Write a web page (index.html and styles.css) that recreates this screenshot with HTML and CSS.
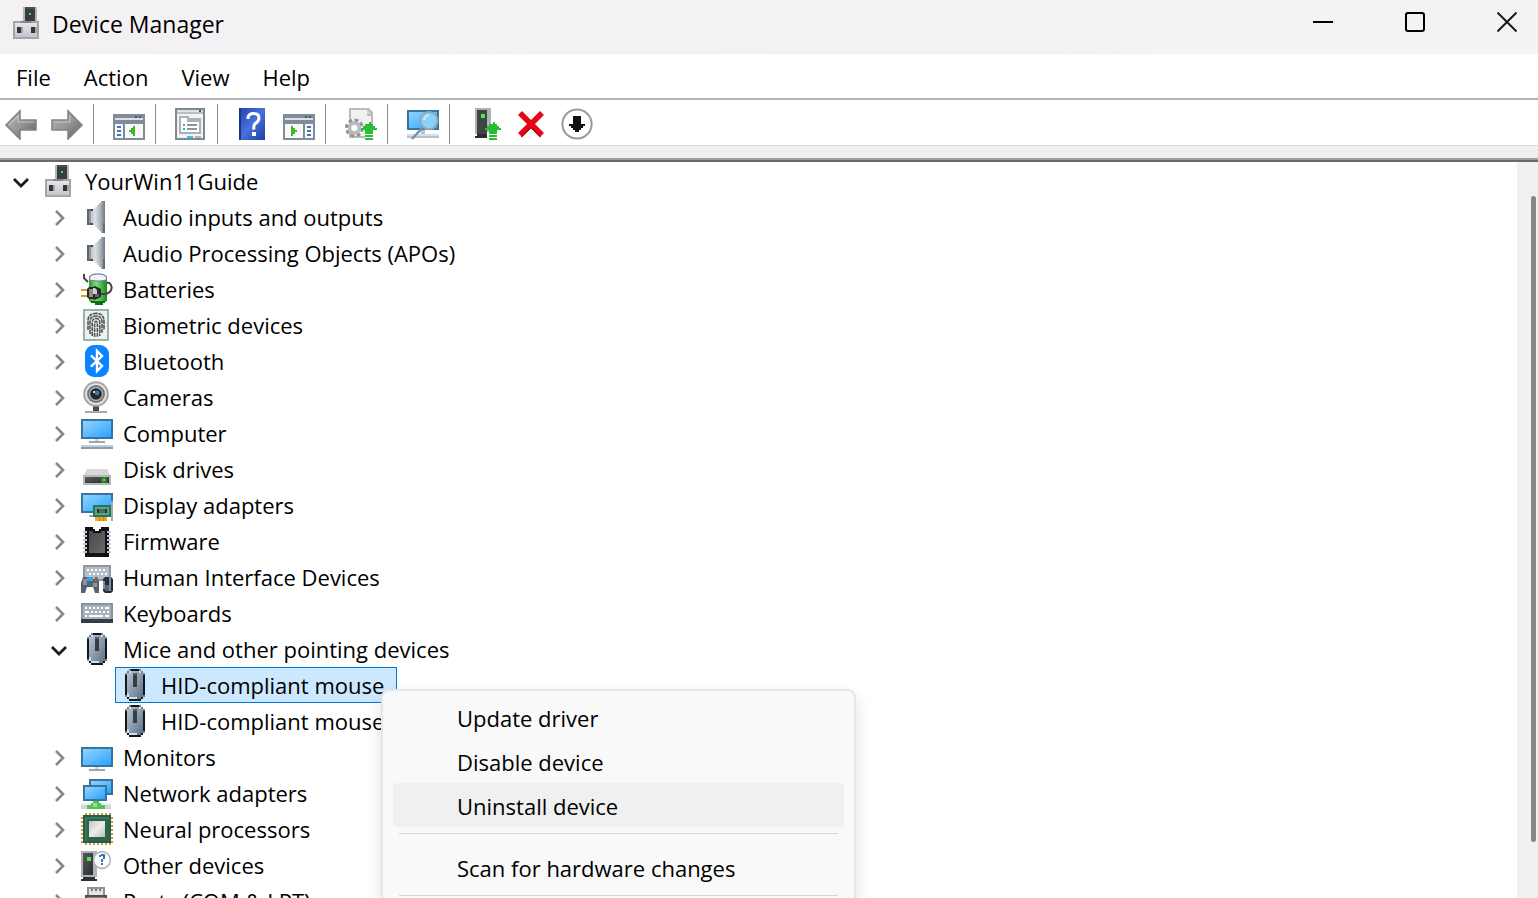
FILE: index.html
```html
<!DOCTYPE html>
<html lang="en">
<head>
<meta charset="utf-8">
<meta name="viewport" content="width=device-width, initial-scale=1">
<title>Device Manager</title>
<link rel="stylesheet" href="styles.css">
</head>
<body>
<svg class="sprite" aria-hidden="true">
  <defs>
    <linearGradient id="g-screen" x1="0" y1="0" x2="1" y2="1"><stop offset="0" stop-color="#8fd3ff"/><stop offset=".5" stop-color="#5fbcff"/><stop offset="1" stop-color="#27a3fb"/></linearGradient>
    <linearGradient id="g-metal" x1="0" y1="0" x2="0" y2="1"><stop offset="0" stop-color="#e6e6ea"/><stop offset="1" stop-color="#c4c4ca"/></linearGradient>
    <linearGradient id="g-dark" x1="0" y1="0" x2="1" y2="1"><stop offset="0" stop-color="#5a5a5a"/><stop offset="1" stop-color="#2c2c2c"/></linearGradient>
    <linearGradient id="g-chip" x1="0" y1="0" x2="1" y2="1"><stop offset="0" stop-color="#484848"/><stop offset="1" stop-color="#6a6a6a"/></linearGradient>
    <linearGradient id="g-cone" x1="0" y1="0" x2="1" y2="0"><stop offset="0" stop-color="#c2c6ca"/><stop offset=".3" stop-color="#dcdfe1"/><stop offset=".65" stop-color="#b0b6bc"/><stop offset="1" stop-color="#6e7a87"/></linearGradient>
    <linearGradient id="g-arrow" x1="0" y1="0" x2="1" y2="1"><stop offset="0" stop-color="#b4b4b4"/><stop offset=".5" stop-color="#969696"/><stop offset="1" stop-color="#5c5c5c"/></linearGradient>
    <linearGradient id="g-help" x1="0" y1="0" x2="1" y2="1"><stop offset="0" stop-color="#2440a8"/><stop offset=".5" stop-color="#4672dc"/><stop offset="1" stop-color="#1f3c9e"/></linearGradient>
    <linearGradient id="g-mouse" x1="0" y1="0" x2="1" y2="1"><stop offset="0" stop-color="#b7c4d4"/><stop offset=".5" stop-color="#8b9cb0"/><stop offset="1" stop-color="#5a6f86"/></linearGradient>
    <linearGradient id="g-battery" x1="0" y1="0" x2="1" y2="0"><stop offset="0" stop-color="#2c9a2c"/><stop offset=".4" stop-color="#7be07b"/><stop offset="1" stop-color="#178a1c"/></linearGradient>
    <linearGradient id="g-silver" x1="0" y1="0" x2="1" y2="1"><stop offset="0" stop-color="#c4c4c4"/><stop offset=".5" stop-color="#ececec"/><stop offset="1" stop-color="#bcbcbc"/></linearGradient>
  </defs>

  <symbol id="i-device" viewBox="0 0 16 16">
    <path fill="#b3b7ba" d="M6 0h7v8H6z"/><path fill="#3a3d3f" d="M7 0h5v8H7z"/><path fill="#4b4f51" d="M7 0h5v1H7z"/><path fill="#3ee84a" d="M9 3h1v1H9z"/>
    <path fill="#a4a4aa" d="M1 7h13v9H1z"/><path fill="url(#g-metal)" d="M2 8h11v7H2z"/><path fill="#84848a" d="M5 7h5v1H5z"/>
    <path fill="#33353a" d="M3 10h2v3H3zM10 10h2v3h-2z"/><path fill="#a2a4a8" d="M5 10h1v3H5zM12 10h1v3h-1z"/>
  </symbol>

  <symbol id="i-speaker" viewBox="0 0 16 16">
    <path fill="#5b6670" d="M3 4h3v8H3z"/><path fill="#8d98a2" d="M4 5h1v6H4z"/>
    <path fill="url(#g-cone)" d="M5 5h1V4h1V3h1V2h1V1h1V0h2v16h-2v-1H9v-1H8v-1H7v-1H6v-1H5z"/><path fill="#606c79" d="M11 11h1v5h-1z"/><path fill="#3e4851" d="M5 4h1v1H5zM5 11h1v1H5z"/>
  </symbol>

  <symbol id="i-battery" viewBox="0 0 16 16">
    <path fill="url(#g-battery)" d="M4 3h9v11q-4.500 3-9 0z"/><path fill="#f2f2fa" stroke="#7d7d9c" stroke-width=".6" d="M4.300 3.500V2Q5 .4 8.500 .4t4.200 1.600v1.500q-4 1-8.400 0z"/>
    <path fill="#0d6d14" d="M5 14h7v1H5zM7 15h4v1H7z"/>
    <path fill="none" stroke="#444" d="M1.500 .5v2l2 2M10 10.500h2.500q3-1 2.800-3.500-.5-2.500-2.300-2"/>
    <path fill="#d9a520" d="M0 8h4v1H0zM0 11h4v1H0z"/><path fill="#2a2a2a" d="M3 8l1-1h2l1-.5 3 1.500v4l-3 1.500-1-.5H4l-1-1z"/><path fill="#8f8f8f" d="M4 8h2v4H4z"/><path fill="#cfcfcf" d="M6 7.500h1l1 1v2H6z"/><path fill="#666" d="M7 10.500h2v1.500H7z"/>
  </symbol>

  <symbol id="i-finger" viewBox="0 0 16 16">
    <path fill="#93b5ab" d="M1 0h13v16H1z"/><path fill="#eef1ee" d="M2 1h11v14H2z"/>
    <g fill="none" stroke="#4f5553" stroke-width=".8" stroke-dasharray="2 .35"><path d="M3.500 10.500V6q0-3.800 4-3.800t4 3.800v4.500"/><path d="M4.500 12.500V6.500q0-3 3-3t3 3v5.500"/><path d="M5.600 13.500V7q0-2.300 1.900-2.300T9.400 7v6.500"/><path d="M6.800 14V7.500q0-1.300.7-1.300t.7 1.300V14"/></g>
  </symbol>

  <symbol id="i-bluetooth" viewBox="0 0 16 16">
    <rect x="2" width="12" height="16" rx="4.500" fill="#0a84ff"/><path fill="none" stroke="#fff" stroke-width="1.200" d="M5 5.200l5.500 5.300L8 13V3l2.500 2.500L5 10.800"/>
  </symbol>

  <symbol id="i-camera" viewBox="0 0 16 16">
    <path fill="#4a4a4a" d="M6 12h3v3H6z"/><path fill="#a8a8a8" d="M2 15h11v1H2z"/><circle cx="7.500" cy="6.500" r="6.400" fill="#a5a5a5"/><circle cx="7.500" cy="6.500" r="5.400" fill="#e4e4e4"/><circle cx="7.500" cy="6.500" r="4.500" fill="#747474"/><circle cx="7.500" cy="6.500" r="3.600" fill="#b0b0b0"/><circle cx="7.500" cy="6.500" r="2.900" fill="#1d2733"/><circle cx="8" cy="6" r="1.200" fill="#4d75a0"/><path fill="#c3d7e8" d="M6 5h1v1H6z"/>
  </symbol>

  <symbol id="i-computer" viewBox="0 0 16 16">
    <path fill="#38749c" d="M0 1h16v10H0z"/><path fill="url(#g-screen)" d="M1 2h14v8H1z"/><path fill="#ccd5dd" d="M7 11h2v1H7z"/><path fill="#97a7b6" d="M4 12h8v1H4z"/><path fill="#c4ced8" d="M0 14h16v1H0z"/><path fill="#899caf" d="M0 15h16v1H0z"/>
  </symbol>

  <symbol id="i-disk" viewBox="0 0 16 16">
    <path fill="#d7d7d9" d="M3 8h10l2 4H1z"/><path fill="#b5b7b9" d="M1 11h14v5H1z"/><path fill="url(#g-dark)" d="M2 12h12v3H2z"/><path fill="#2f7d35" d="M10 12h3v3h-3z"/><path fill="#45ee4c" d="M11 13h1v1h-1z"/>
  </symbol>

  <symbol id="i-display" viewBox="0 0 16 16">
    <path fill="#38749c" d="M0 2h16v10H0z"/><path fill="url(#g-screen)" d="M1 3h14v8H1z"/><path fill="#a6a9ac" d="M15 6h1v10h-1zM4 13h3v1H4z"/><path fill="#287657" d="M6 8h9v6H6z"/><path fill="#57a57e" d="M7 9h7v4H7z"/><path fill="#24372f" d="M8 10h5v2H8z"/><path fill="#53695e" d="M9 10h3v2H9z"/><path fill="#f0a41d" d="M7 14h6v2H7z"/><path fill="#cf7f10" d="M9 14h.5v2H9zM11 14h.5v2h-.5z"/>
  </symbol>

  <symbol id="i-firmware" viewBox="0 0 16 16">
    <path fill="#111" d="M2 1h4v1h1v1h2V2h1V1h4v15H2z"/><path fill="url(#g-chip)" d="M4 3h2v1h4V3h2v11H4z"/>
    <path fill="#b9c8d6" d="M1 3h2v1H1zM1 5h2v1H1zM1 7h2v1H1zM1 9h2v1H1zM1 11h2v1H1zM1 13h2v1H1zM13 3h2v1h-2zM13 5h2v1h-2zM13 7h2v1h-2zM13 9h2v1h-2zM13 11h2v1h-2zM13 13h2v1h-2z"/>
  </symbol>

  <symbol id="i-hid" viewBox="0 0 16 16">
    <path fill="#8c99a5" d="M1 2h14v8H1z"/><path fill="#b7bfc6" d="M2 3h12v6H2z"/><path fill="#fff" d="M3 4h1v1H3zM5 4h1v1H5zM7 4h1v1H7zM9 4h1v1H9zM11 4h1v1h-1zM4 6h1v1H4zM6 6h1v1H6zM8 6h1v1H8zM10 6h1v1h-1zM12 6h1v1h-1z"/>
    <path fill="#56626d" d="M1 8h7l1 2v6H7l-1-3H3l-1 3H0v-5z"/><path fill="#8795a2" d="M1 9h2v3H1zM6 11h2v2H6z"/><path fill="#2aa5f5" d="M3 8h3v2H3z"/><path fill="#f3b04c" d="M6 8h1v1H6z"/><path fill="#e0522c" d="M7 9h1v1H7z"/>
    <path fill="#252d36" d="M12 8h3l1 1v6l-1 1h-3l-1-1V9z"/><path fill="#7c8ea2" d="M14 8h1v7h-1zM11 10h1v4h-1z"/><path fill="#56667a" d="M12 12h2v3h-2z"/>
  </symbol>

  <symbol id="i-keyboard" viewBox="0 0 16 16">
    <path fill="#87939d" d="M0 3h16v9H0z"/><path fill="#a9b3bb" d="M1 4h14v7H1z"/><path fill="#333e46" d="M0 11h16v2H0z"/>
    <path fill="#fff" d="M2 5h1v1H2zM4 5h1v1H4zM6 5h1v1H6zM8 5h1v1H8zM10 5h1v1h-1zM12 5h2v1h-2zM2 7h2v1H2zM5 7h1v1H5zM7 7h1v1H7zM9 7h1v1H9zM11 7h1v1h-1zM13 7h1v1h-1zM2 9h1v1H2zM4 9h7v1H4zM12 9h2v1h-2z"/>
  </symbol>

  <symbol id="i-mouse" viewBox="0 0 16 16">
    <path fill="#777d84" d="M5 0h6v1h1v1h1v12h-1v1h-1v1H5v-1H4v-1H3V2h1V1h1z"/><path fill="#14171a" d="M6 0h4v1H6zM3 3h1v10H3zM12 3h1v10h-1zM4 13h1v2H4zM11 13h1v2h-1zM5 15h6v1H5z"/><path fill="url(#g-mouse)" d="M5 1h6v1h1v12h-1v1H5v-1H4V2h1z"/><path fill="#d5dde6" d="M5 1h1v1H5zM10 1h1v1h-1zM4 12h1v2H4zM5 14h4v1H5z"/><path fill="#3c3c3c" d="M7 2h2v7H7z"/><path fill="#5c5f61" d="M7 2h2v1H7z"/>
  </symbol>

  <symbol id="i-monitor" viewBox="0 0 16 16">
    <path fill="#38749c" d="M0 3h16v10H0z"/><path fill="url(#g-screen)" d="M1 4h14v8H1z"/><path fill="#ccd5dd" d="M7 13h2v1H7z"/><path fill="#97a7b6" d="M4 14h8v1H4z"/>
  </symbol>

  <symbol id="i-network" viewBox="0 0 16 16">
    <path fill="#38749c" d="M4 1h12v8H4z"/><path fill="url(#g-screen)" d="M5 2h10v6H5z"/><path fill="#38749c" d="M1 4h12v8H1z"/><path fill="url(#g-screen)" d="M2 5h10v6H2z"/>
    <path fill="#d3d6d8" d="M0 13h15v3H0z"/><path fill="#efefef" d="M0 13h15v1H0z"/><path fill="#55c455" d="M6 12h3v1h1v1h2v2H3v-2h2v-1h1z"/><path fill="#8fe08a" d="M6 13h2v2H6z"/>
  </symbol>

  <symbol id="i-neural" viewBox="0 0 16 16">
    <path fill="none" stroke="#c99a40" stroke-dasharray="1 1" d="M2 .5h13M2 15.500h13M.5 2v13M15.500 2v13"/><path fill="#2a5c46" d="M1 1h14v14H1z"/><path fill="#3a775b" d="M2 2h12v12H2z"/><path fill="#2d624b" d="M3 3h11v11H3z"/><path fill="url(#g-silver)" d="M4 4h8v8H4z"/>
  </symbol>

  <symbol id="i-other" viewBox="0 0 16 16">
    <path fill="#aeb3b8" d="M0 1h8v13H0z"/><path fill="url(#g-dark)" d="M1 2h5v11H1z"/><path fill="#2d3034" d="M0 15h8v1H0zM1 14h6v1H1z"/><path fill="#3ef04a" d="M3 4h2v2H3z"/>
    <circle cx="10.500" cy="5.500" r="4.200" fill="#fff" stroke="#b4b8bc" stroke-width=".8"/><path fill="#2a78c2" d="M9 3h1v1H9zM10 2.500h2v1h-2zM11 3h1v2h-1zM10 5h1v1.500h-1zM10 7h1v1h-1z"/>
  </symbol>

  <symbol id="i-port" viewBox="0 0 16 16">
    <path fill="#909396" d="M3 1h9v5H3z"/><path fill="#e3e3e3" d="M4 2h7v3H4z"/><path fill="#777" d="M5 2h1v1H5zM7 2h1v1H7zM9 2h1v1H9z"/><path fill="#4d4f51" d="M2 5h11v11H2z"/><path fill="#858789" d="M3 6h9v9H3z"/>
  </symbol>

  <symbol id="t-back" viewBox="0 0 16 16">
    <path fill="url(#g-arrow)" stroke="#858585" stroke-width=".8" d="M.5 8.500L7.500 1.500V6H15.500v5H7.500v4.500z"/><path fill="none" stroke="#c4c4c4" stroke-width=".6" d="M2 8.500l4.600-4.600V7h8"/>
  </symbol>

  <symbol id="t-forward" viewBox="0 0 16 16">
    <path fill="url(#g-arrow)" stroke="#858585" stroke-width=".8" d="M15.500 8.500L8.500 1.500V6H.5v5h8v4.500z"/><path fill="none" stroke="#c4c4c4" stroke-width=".6" d="M1.400 7h8V3.900"/>
  </symbol>

  <symbol id="t-tree" viewBox="0 0 16 16">
    <path fill="#808d99" d="M0 3h16v13H0z"/><path fill="#dbe1e6" d="M1 5h14v1H1z"/><path fill="#f8f8f8" d="M1 8h4v7H1zM6 8h9v7H6z"/><path fill="#3e5875" d="M11 4h1v1h-1zM13 4h1v1h-1z"/><path fill="#3b76bd" d="M2 9h2v1H2zM2 11h2v1H2zM2 13h2v1H2z"/><path fill="#43b52c" d="M8 11h1v-1h1V9h1v5h-1v-1H9v-1H8z"/>
  </symbol>

  <symbol id="t-pane" viewBox="0 0 16 16">
    <path fill="#808d99" d="M0 3h16v13H0z"/><path fill="#dbe1e6" d="M1 5h14v1H1z"/><path fill="#f8f8f8" d="M1 8h9v7H1zM11 8h4v7h-4z"/><path fill="#3e5875" d="M11 4h1v1h-1zM13 4h1v1h-1z"/><path fill="#3b76bd" d="M12 9h2v1h-2zM12 11h2v1h-2zM12 13h2v1h-2z"/><path fill="#43b52c" d="M7 11H6v-1H5V9H4v5h1v-1h1v-1h1z"/>
  </symbol>

  <symbol id="t-properties" viewBox="0 0 16 16">
    <path fill="#7d8890" d="M0 0h15v16H0z"/><path fill="#dde1e3" d="M1 1h13v1H1z"/><path fill="#f3f3f3" d="M1 3h13v12H1z"/><path fill="#b7bec4" d="M1 2h13v1H1z"/><path fill="#40566c" d="M12 1h1v1h-1z"/><path fill="#a8b1ba" d="M2 4h5v1h6v8H2z"/><path fill="#fff" d="M3 5h3v1h6v6H3z"/><path fill="#a8b1ba" d="M6 5h1v1h5v1H6z"/><path fill="#27a8e0" d="M4 8h1v1H4zM4 10h1v1H4z"/><path fill="#8d9499" d="M6 8h5v1H6zM6 10h5v1H6z"/><path fill="#1fc8f5" d="M6 14h3v1H6z"/><path fill="#b4b8bb" d="M10 14h3v1h-3z"/>
  </symbol>

  <symbol id="t-help" viewBox="0 0 16 16">
    <path fill="url(#g-help)" d="M1 0h13v16H1z"/><path fill="#1b358b" d="M1 0h1v16H1z"/><path fill="none" stroke="#fff" stroke-width="1.500" d="M5.500 5.500V5Q5.700 2.800 8.300 2.800T11 5Q11 6.500 9.500 7.500T8.500 10.800"/><path fill="#fff" d="M7.500 12h2v2h-2z"/>
  </symbol>

  <symbol id="t-update" viewBox="0 0 16 16">
    <path fill="#b9bbbd" d="M2 0h10l2 2v13H2z"/><path fill="#f1f1f1" d="M3 1h8v3h2v10H3z"/><path fill="#d5d5d5" d="M11 1l2 2h-2z"/>
    <circle cx="4.700" cy="10" r="3.800" fill="none" stroke="#8f9498" stroke-width="1.800" stroke-dasharray="1.800 1.180"/><circle cx="4.700" cy="10" r="2.500" fill="none" stroke="#b5babd" stroke-width="1.800"/><circle cx="4.700" cy="10" r="1.200" fill="#fff"/>
    <path fill="#fff" d="M10 12h4v4h-4z"/><path fill="#27bd35" d="M12 7h1v1h1v1h1v1h1v1h-2v1h-4v-1H8v-1h1V9h1V8h2zM10 11h4v2h-4zM10 13.500h4v1h-4zM10 15h4v1h-4z"/>
  </symbol>

  <symbol id="t-scan" viewBox="0 0 16 16">
    <path fill="#38749c" d="M0 1h16v10H0z"/><path fill="url(#g-screen)" d="M1 2h14v8H1z"/><path fill="#b7c2cd" d="M7 11h2v2H7zM0 14h16v1H0z"/><path fill="#d8dfe6" d="M0 13h16v1H0z"/><circle cx="11" cy="6.300" r="4.300" fill="#8bd1fb" stroke="#91a6b6"/><path stroke="#7990a1" stroke-width="1.200" d="M7.800 9.800L2.500 15.500"/><path fill="none" stroke="#c8e9ff" d="M8.500 6q.5-2 2.500-2.500"/>
  </symbol>

  <symbol id="t-enable" viewBox="0 0 16 16">
    <path fill="#aeb1b5" d="M3 0h8v13H3z"/><path fill="#414447" d="M4 1h5v12H4z"/><path fill="#2b2d30" d="M3 14h6v1H3zM4 13h5v1H4z"/><path fill="#3ef04a" d="M6 3h2v2H6z"/><path fill="#fff" d="M9 12h6v4H9z"/>
    <path fill="#27bd35" d="M12 7h1v1h1v1h1v1h1v1h-2v2h-4v-2H8v-1h1V9h1V8h2zM10 13.500h4v1h-4zM10 15h4v1h-4z"/>
  </symbol>

  <symbol id="t-remove" viewBox="0 0 16 16">
    <path stroke="#e30613" stroke-width="2.800" d="M2.500 2.500l11 11M13.500 2.500l-11 11"/><path stroke="#b4000c" stroke-width=".6" d="M8 9.800l4.800 4.800M8 9.800l-4.800 4.800"/>
  </symbol>

  <symbol id="t-down" viewBox="0 0 16 16">
    <circle cx="8" cy="8" r="7.300" fill="#fff" stroke="#999"/><path fill="#111" d="M6 4h4v4h2v1h-1v1h-1v1H9v1H7v-1H6v-1H5V9H4V8h2z"/>
  </symbol>

  <symbol id="c-closed" viewBox="0 0 16 16"><path fill="none" stroke="#888" stroke-width="2.600" d="M5 1l7 7-7 7"/></symbol>
  <symbol id="c-open" viewBox="0 0 16 16"><path fill="none" stroke="#1b1b1b" stroke-width="2.800" d="M1 5l7 7 7-7"/></symbol>
</svg>

<main class="window">
  <header class="titlebar">
    <svg class="icon"><use href="#i-device"/></svg>
    <h1 class="title">Device Manager</h1>
    <div class="controls">
      <button class="control" aria-label="Minimize"><svg class="glyph" viewBox="0 0 20 20"><path d="M0 10h20"/></svg></button>
      <button class="control" aria-label="Maximize"><svg class="glyph" viewBox="0 0 20 20"><rect x="1" y="1" width="18" height="18" rx="2"/></svg></button>
      <button class="control" aria-label="Close"><svg class="glyph glyph-thin" viewBox="0 0 20 20"><path d="M.5 .5l19 19M19.500 .5l-19 19"/></svg></button>
    </div>
  </header>

  <nav class="menubar">
    <button class="menu">File</button>
    <button class="menu">Action</button>
    <button class="menu">View</button>
    <button class="menu">Help</button>
  </nav>

  <div class="toolbar" role="toolbar" aria-label="Tools">
    <button class="tool" aria-label="Back"><svg class="icon"><use href="#t-back"/></svg></button>
    <button class="tool" aria-label="Forward"><svg class="icon"><use href="#t-forward"/></svg></button>
    <span class="divider"></span>
    <button class="tool" aria-label="Show or hide console tree"><svg class="icon"><use href="#t-tree"/></svg></button>
    <span class="divider"></span>
    <button class="tool" aria-label="Properties"><svg class="icon"><use href="#t-properties"/></svg></button>
    <span class="divider"></span>
    <button class="tool" aria-label="Help topics"><svg class="icon"><use href="#t-help"/></svg></button>
    <button class="tool" aria-label="Show or hide action pane"><svg class="icon"><use href="#t-pane"/></svg></button>
    <span class="divider"></span>
    <button class="tool" aria-label="Update driver"><svg class="icon"><use href="#t-update"/></svg></button>
    <span class="divider"></span>
    <button class="tool" aria-label="Scan for hardware changes"><svg class="icon"><use href="#t-scan"/></svg></button>
    <span class="divider"></span>
    <button class="tool" aria-label="Enable device"><svg class="icon"><use href="#t-enable"/></svg></button>
    <button class="tool" aria-label="Uninstall device"><svg class="icon"><use href="#t-remove"/></svg></button>
    <button class="tool" aria-label="Disable device"><svg class="icon"><use href="#t-down"/></svg></button>
  </div>
  <div class="ridge"></div>

  <section class="content">
    <ul class="tree">
      <li>
        <div class="row"><button class="twisty" aria-label="Collapse"><svg><use href="#c-open"/></svg></button><span class="node"><svg class="icon"><use href="#i-device"/></svg>YourWin11Guide</span></div>
        <ul class="branch">
          <li class="row"><button class="twisty" aria-label="Expand"><svg><use href="#c-closed"/></svg></button><span class="node"><svg class="icon"><use href="#i-speaker"/></svg>Audio inputs and outputs</span></li>
          <li class="row"><button class="twisty" aria-label="Expand"><svg><use href="#c-closed"/></svg></button><span class="node"><svg class="icon"><use href="#i-speaker"/></svg>Audio Processing Objects (APOs)</span></li>
          <li class="row"><button class="twisty" aria-label="Expand"><svg><use href="#c-closed"/></svg></button><span class="node"><svg class="icon"><use href="#i-battery"/></svg>Batteries</span></li>
          <li class="row"><button class="twisty" aria-label="Expand"><svg><use href="#c-closed"/></svg></button><span class="node"><svg class="icon"><use href="#i-finger"/></svg>Biometric devices</span></li>
          <li class="row"><button class="twisty" aria-label="Expand"><svg><use href="#c-closed"/></svg></button><span class="node"><svg class="icon"><use href="#i-bluetooth"/></svg>Bluetooth</span></li>
          <li class="row"><button class="twisty" aria-label="Expand"><svg><use href="#c-closed"/></svg></button><span class="node"><svg class="icon"><use href="#i-camera"/></svg>Cameras</span></li>
          <li class="row"><button class="twisty" aria-label="Expand"><svg><use href="#c-closed"/></svg></button><span class="node"><svg class="icon"><use href="#i-computer"/></svg>Computer</span></li>
          <li class="row"><button class="twisty" aria-label="Expand"><svg><use href="#c-closed"/></svg></button><span class="node"><svg class="icon"><use href="#i-disk"/></svg>Disk drives</span></li>
          <li class="row"><button class="twisty" aria-label="Expand"><svg><use href="#c-closed"/></svg></button><span class="node"><svg class="icon"><use href="#i-display"/></svg>Display adapters</span></li>
          <li class="row"><button class="twisty" aria-label="Expand"><svg><use href="#c-closed"/></svg></button><span class="node"><svg class="icon"><use href="#i-firmware"/></svg>Firmware</span></li>
          <li class="row"><button class="twisty" aria-label="Expand"><svg><use href="#c-closed"/></svg></button><span class="node"><svg class="icon"><use href="#i-hid"/></svg>Human Interface Devices</span></li>
          <li class="row"><button class="twisty" aria-label="Expand"><svg><use href="#c-closed"/></svg></button><span class="node"><svg class="icon"><use href="#i-keyboard"/></svg>Keyboards</span></li>
          <li>
            <div class="row"><button class="twisty" aria-label="Collapse"><svg><use href="#c-open"/></svg></button><span class="node"><svg class="icon"><use href="#i-mouse"/></svg>Mice and other pointing devices</span></div>
            <ul class="branch">
              <li class="row leaf"><span class="node selected"><svg class="icon"><use href="#i-mouse"/></svg>HID-compliant mouse</span></li>
              <li class="row leaf"><span class="node"><svg class="icon"><use href="#i-mouse"/></svg>HID-compliant mouse</span></li>
            </ul>
          </li>
          <li class="row"><button class="twisty" aria-label="Expand"><svg><use href="#c-closed"/></svg></button><span class="node"><svg class="icon"><use href="#i-monitor"/></svg>Monitors</span></li>
          <li class="row"><button class="twisty" aria-label="Expand"><svg><use href="#c-closed"/></svg></button><span class="node"><svg class="icon"><use href="#i-network"/></svg>Network adapters</span></li>
          <li class="row"><button class="twisty" aria-label="Expand"><svg><use href="#c-closed"/></svg></button><span class="node"><svg class="icon"><use href="#i-neural"/></svg>Neural processors</span></li>
          <li class="row"><button class="twisty" aria-label="Expand"><svg><use href="#c-closed"/></svg></button><span class="node"><svg class="icon"><use href="#i-other"/></svg>Other devices</span></li>
          <li class="row"><button class="twisty" aria-label="Expand"><svg><use href="#c-closed"/></svg></button><span class="node"><svg class="icon"><use href="#i-port"/></svg>Ports (COM &amp; LPT)</span></li>
        </ul>
      </li>
    </ul>
    <div class="scrollbar"><div class="thumb"></div></div>
  </section>

  <div class="context" role="menu">
    <button class="command" role="menuitem">Update driver</button>
    <button class="command" role="menuitem">Disable device</button>
    <button class="command active" role="menuitem">Uninstall device</button>
    <hr class="rule">
    <button class="command" role="menuitem">Scan for hardware changes</button>
    <hr class="rule">
  </div>
</main>
</body>
</html>
```
FILE: styles.css
```css
* { box-sizing: border-box; }

body {
  margin: 0;
  font-family: "Open Sans", "Noto Sans", sans-serif;
  font-size: 22px;
  line-height: 36px;
  color: #000;
  background: #fff;
}

button {
  margin: 0;
  padding: 0;
  border: 0;
  background: none;
  font: inherit;
  color: inherit;
}

ul { margin: 0; padding: 0; list-style: none; }

.sprite { position: absolute; width: 0; height: 0; }
.icon { display: block; flex: none; width: 32px; height: 32px; }

.window {
  position: relative;
  display: flex;
  flex-direction: column;
  height: 100vh;
  overflow: hidden;
}

/* Title bar */
.titlebar {
  display: flex;
  flex: none;
  align-items: flex-start;
  height: 54px;
  padding: 7px 0 0 11px;
  background: linear-gradient(90deg, #f4f1f3, #f1f3f5 80%, #f3f3f3 88%);
}
.title {
  flex: 1;
  margin: 0 0 0 9px;
  font-size: 23px;
  font-weight: 400;
  line-height: 34px;
}
.controls { display: flex; gap: 30px; }
.control {
  display: flex;
  align-items: center;
  justify-content: center;
  width: 62px;
  height: 30px;
}
.glyph { width: 20px; height: 20px; fill: none; stroke: #000; stroke-width: 2; }
.glyph-thin { stroke: #1a1a1a; }

/* Menu bar */
.menubar {
  display: flex;
  flex: none;
  gap: 1px;
  height: 46px;
  border-bottom: 2px solid #b3b3b7;
}
.menu { padding: 0 16px; line-height: 46px; }

/* Toolbar */
.toolbar {
  display: flex;
  flex: none;
  gap: 4px;
  height: 46px;
  padding: 4px 0 1px;
  border-bottom: 1px solid #d9d9d9;
}
.tool {
  display: flex;
  align-items: center;
  justify-content: center;
  width: 42px;
}
.divider { width: 1px; margin: 0 10px 0 1px; background: #8c8c8c; }
.ridge {
  flex: none;
  height: 14px;
  background: #f0f0f0;
  border-bottom: 2px solid #9f9f9f;
}

/* Device tree */
.content {
  display: flex;
  flex: 1;
  min-height: 0;
  border-top: 2px solid #696969;
}
.tree { flex: 1; padding: 1px 0 0 2px; overflow: hidden; }
.branch { padding-left: 38px; }
.row { display: flex; height: 36px; }
.twisty {
  display: flex;
  align-items: center;
  justify-content: center;
  width: 38px;
  padding-top: 2px;
}
.twisty svg { width: 16px; height: 16px; }
.node {
  display: flex;
  align-items: center;
  gap: 10px;
  padding: 0 6px 0 2px;
  border: 1px solid transparent;
  line-height: 36px;
  white-space: nowrap;
}
.leaf { padding-left: 37px; }
.leaf .node { padding: 0 12px 0 3px; }
.selected { background: #cce8ff; border-color: #0078d4; }

.scrollbar {
  flex: none;
  width: 21px;
  padding: 34px 2px 0 14px;
  background: #f0f0f0;
}
.thumb { height: 92%; border-radius: 3px; background: #868686; }

/* Context menu */
.context {
  position: absolute;
  top: 689px;
  left: 381px;
  width: 475px;
  padding: 4px 10px;
  border: 2px solid #e5e5e5;
  border-radius: 8px;
  background: #f9f9f9;
  box-shadow: 0 8px 16px rgba(0, 0, 0, .12);
}
.command {
  display: block;
  width: 100%;
  height: 44px;
  padding: 2px 0 0 64px;
  border-radius: 4px;
  text-align: left;
}
.active { background: #f0f0f0; }
.rule { height: 1px; margin: 6px 6px 11px; border: 0; background: #d5d5d5; }
```
